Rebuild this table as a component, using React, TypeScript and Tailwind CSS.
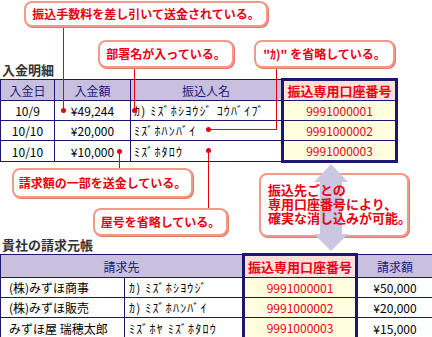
import React from 'react'

// Annotated comparison of an incoming-payment statement and the billing ledger

const NAVY_LINE = 'border-[#1c1670]'

type CalloutProps = { className: string; children: React.ReactNode }

const Callout = ({ className, children }: CalloutProps) => (
  <div
    className={`absolute flex items-center justify-center rounded-[8px] border-2 border-[#f3988a] bg-white shadow-[1px_1px_0_#e57a66] text-[12px] font-bold leading-none text-[#e60012] ${className}`}
  >
    {children}
  </div>
)

const payments = [
  { date: '10/9', amount: '¥49,244', name: 'ｶ) ﾐｽﾞﾎｼﾖｳｼﾞ ｺｳﾊﾞｲﾌﾞ', account: '9991000001' },
  { date: '10/10', amount: '¥20,000', name: 'ﾐｽﾞﾎﾊﾝﾊﾞｲ', account: '9991000002' },
  { date: '10/10', amount: '¥10,000', name: 'ﾐｽﾞﾎﾀﾛｳ', account: '9991000003' },
]

const ledger = [
  { company: '(株)みずほ商事', kana: 'ｶ) ﾐｽﾞﾎｼﾖｳｼﾞ', account: '9991000001', amount: '¥50,000' },
  { company: '(株)みずほ販売', kana: 'ｶ) ﾐｽﾞﾎﾊﾝﾊﾞｲ', account: '9991000002', amount: '¥20,000' },
  { company: 'みずほ屋 瑞穂太郎', kana: 'ﾐｽﾞﾎﾔ ﾐｽﾞﾎﾀﾛｳ', account: '9991000003', amount: '¥15,000' },
]

export default function App() {
  return (
    <div className="relative h-[337px] w-[432px] overflow-hidden bg-white font-['Noto_Sans_CJK_JP',sans-serif] text-[12px] text-black">
      {/* 入金明細 */}
      <h2 className="pl-[2px] pt-[62px] text-[13px] font-bold leading-[16px] text-[#333]">入金明細</h2>
      <table className={`w-[396px] table-fixed border-collapse border ${NAVY_LINE}`}>
        <colgroup>
          <col className="w-[54px]" />
          <col className="w-[76px]" />
          <col className="w-[152px]" />
          <col className="w-[114px]" />
        </colgroup>
        <thead>
          <tr className="h-[21px] bg-[#c8c0de] text-[#1a1a80]">
            <th className={`border ${NAVY_LINE} p-0 font-normal leading-[19px]`}>入金日</th>
            <th className={`border ${NAVY_LINE} p-0 font-normal leading-[19px]`}>入金額</th>
            <th className={`border ${NAVY_LINE} p-0 font-normal leading-[19px]`}>振込人名</th>
            <th className="border-[3px] border-b border-[#1c1670] bg-[#fde0d8] p-0 text-[13px] font-bold leading-[19px] text-[#e60012]">
              振込専用口座番号
            </th>
          </tr>
        </thead>
        <tbody>
          {payments.map((p, i) => (
            <tr key={i} className="h-[20px]">
              <td className={`border ${NAVY_LINE} p-0 text-center leading-[19px]`}>{p.date}</td>
              <td className={`border ${NAVY_LINE} p-0 text-center leading-[19px]`}>{p.amount}</td>
              <td className={`border ${NAVY_LINE} whitespace-nowrap p-0 pl-[3px] leading-[19px] tracking-[1.2px]`}>{p.name}</td>
              <td
                className={`border-x-[3px] border-[#1c1670] bg-[#ffffe0] p-0 text-center leading-[19px] text-[#e60012] ${
                  i === payments.length - 1 ? 'border-b-[3px]' : 'border-b'
                }`}
              >
                {p.account}
              </td>
            </tr>
          ))}
        </tbody>
      </table>

      {/* 貴社の請求元帳 */}
      <h2 className="mt-[74px] pl-[2px] text-[13px] font-bold leading-[16px] text-[#333]">貴社の請求元帳</h2>
      <table className={`w-[432px] table-fixed border-collapse border ${NAVY_LINE}`}>
        <colgroup>
          <col className="w-[124px]" />
          <col className="w-[119px]" />
          <col className="w-[113px]" />
          <col className="w-[76px]" />
        </colgroup>
        <thead>
          <tr className="h-[23px] bg-[#c8c0de] text-[#1a1a80]">
            <th colSpan={2} className={`border ${NAVY_LINE} p-0 font-normal leading-[21px]`}>
              請求先
            </th>
            <th className="border-[3px] border-b border-[#1c1670] bg-[#fde0d8] p-0 text-[13px] font-bold leading-[21px] text-[#e60012]">
              振込専用口座番号
            </th>
            <th className={`border ${NAVY_LINE} p-0 font-normal leading-[21px]`}>請求額</th>
          </tr>
        </thead>
        <tbody>
          {ledger.map((r, i) => (
            <tr key={i} className="h-[20px]">
              <td className={`border ${NAVY_LINE} whitespace-nowrap p-0 pl-[8px] leading-[19px]`}>{r.company}</td>
              <td className={`border ${NAVY_LINE} whitespace-nowrap p-0 pl-[4px] leading-[19px] tracking-[1.2px]`}>{r.kana}</td>
              <td
                className={`border-x-[3px] border-[#1c1670] bg-[#ffffe0] p-0 text-center leading-[19px] text-[#e60012] ${
                  i === ledger.length - 1 ? 'border-b-[3px]' : 'border-b'
                }`}
              >
                {r.account}
              </td>
              <td className={`border ${NAVY_LINE} p-0 text-center leading-[19px]`}>{r.amount}</td>
            </tr>
          ))}
        </tbody>
      </table>

      {/* Leader lines and dots */}
      <div className="absolute left-[63px] top-[27px] h-[83px] w-px bg-[#e60012]" />
      <div className="absolute left-[61px] top-[108px] h-[5px] w-[5px] rounded-full bg-[#e60012]" />

      <div className="absolute left-[134px] top-[68px] h-[42px] w-px bg-[#e60012]" />
      <div className="absolute left-[132px] top-[108px] h-[5px] w-[5px] rounded-full bg-[#e60012]" />

      <div className="absolute left-[276px] top-[68px] h-[62px] w-px bg-[#e60012]" />
      <div className="absolute left-[208px] top-[129px] h-px w-[69px] bg-[#e60012]" />
      <div className="absolute left-[206px] top-[127px] h-[5px] w-[5px] rounded-full bg-[#e60012]" />

      <div className="absolute left-[119px] top-[151px] h-[17px] w-px bg-[#e60012]" />
      <div className="absolute left-[117px] top-[149px] h-[5px] w-[5px] rounded-full bg-[#e60012]" />

      <div className="absolute left-[208px] top-[150px] h-[58px] w-px bg-[#e60012]" />
      <div className="absolute left-[206px] top-[148px] h-[5px] w-[5px] rounded-full bg-[#e60012]" />

      {/* Callouts */}
      <Callout className="left-[24px] top-[1px] h-[26px] w-[244px]">振込手数料を差し引いて送金されている。</Callout>
      <Callout className="left-[98px] top-[40px] h-[28px] w-[136px]">部署名が入っている。</Callout>
      <Callout className="left-[254px] top-[40px] h-[28px] w-[141px]">"ｶ)" を省略している。</Callout>
      <Callout className="left-[12px] top-[168px] h-[30px] w-[181px]">請求額の一部を送金している。</Callout>
      <Callout className="left-[93px] top-[208px] h-[28px] w-[135px]">屋号を省略している。</Callout>

      {/* Callout with the double-headed arrow running through it */}
      <div className="absolute left-[259px] top-[173px] h-[64px] w-[150px] rounded-[8px] border-2 border-[#f3988a] bg-white pl-[7px] pt-[8px] shadow-[1px_1px_0_#e57a66]">
        <svg className="absolute left-[50px] top-[-11px]" width="40" height="87" viewBox="0 0 40 87">
          <polygon points="20,0 37,18 3,18" fill="#cbc6e2" />
          <rect x="9" y="18" width="22" height="52" fill="#cbc6e2" />
          <polygon points="3,70 37,70 20,87" fill="#cbc6e2" />
        </svg>
        <div className="relative flex flex-col whitespace-nowrap text-[13px] font-bold leading-[14px] text-[#e60012]">
          <span className="h-[14px]">振込先ごとの</span>
          <span className="h-[14px]">専用口座番号により、</span>
          <span className="h-[14px]">確実な消し込みが可能。</span>
        </div>
      </div>
    </div>
  )
}
